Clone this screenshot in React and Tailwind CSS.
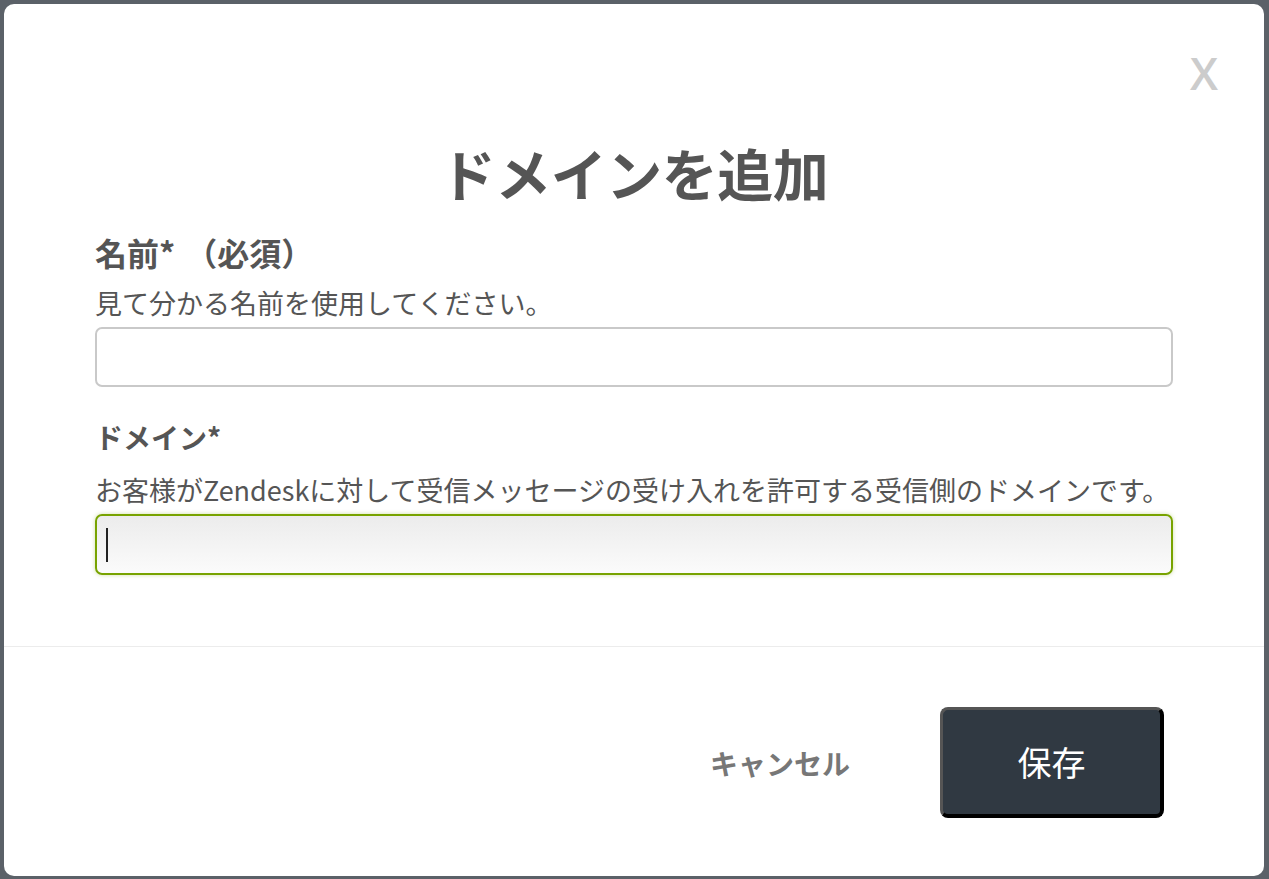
export default function App() {
  const font = { fontFamily: '"Noto Sans CJK JP", "Noto Sans", sans-serif' };
  return (
    <div className="w-[1269px] h-[879px] bg-[#5b6168] p-[4px] pr-[5px] pb-[3px]" style={font}>
      <div className="relative w-full h-full bg-white rounded-[10px] flex flex-col">
        <button className="absolute right-[46px] top-[41px] text-[45px] leading-[56px] text-[#cccccc] font-semibold" style={{ fontFamily: '"Open Sans", "Liberation Sans", sans-serif' }}>
          X
        </button>

        <div className="px-[91px] pt-[136px]">
          <h1 className="text-center text-[56px] leading-[64px] font-bold text-[#555555] tracking-[-0.5px]">
            ドメインを追加
          </h1>

          <div className="mt-[30px]">
            <label className="block text-[32px] leading-[36px] font-bold text-[#555555]">
              名前*<span className="ml-[10px]">（必須）</span>
            </label>
            <p className="mt-[16px] text-[27px] leading-[34px] text-[#555555]">見て分かる名前を使用してください。</p>
            <input
              type="text"
              className="mt-[7px] block w-full h-[60px] rounded-[7px] border-2 border-[#c9c9c9] bg-white outline-none"
            />
          </div>

          <div className="mt-[32px]">
            <label className="block text-[28px] leading-[36px] font-bold text-[#555555]">ドメイン*</label>
            <p className="mt-[18px] text-[27px] leading-[34px] text-[#555555] whitespace-nowrap">
              お客様がZendeskに対して受信メッセージの受け入れを許可する受信側のドメインです。
            </p>
            <div className="mt-[7px] relative h-[61px] rounded-[7px] border-2 border-[#78a300] bg-gradient-to-b from-[#ececec] to-[#fbfbfb] shadow-[0_0_4px_rgba(120,163,0,0.35)]">
              <span className="absolute left-[9px] top-[12px] w-[2px] h-[34px] bg-[#222222]" />
            </div>
          </div>
        </div>

        <div className="mt-[71px] border-t border-[#ececec] flex-1 flex items-center justify-end pr-[100px] pt-[2px] gap-[90px]">
          <button className="text-[28px] leading-[40px] font-bold text-[#777777]">キャンセル</button>
          <button className="w-[224px] h-[111px] rounded-[8px] bg-[#303942] border-t-[3px] border-l-[3px] border-r-[4px] border-b-[4px] border-t-[#555555] border-l-[#555555] border-r-black border-b-black text-white text-[34px] leading-[40px]">
            保存
          </button>
        </div>
      </div>
    </div>
  );
}
